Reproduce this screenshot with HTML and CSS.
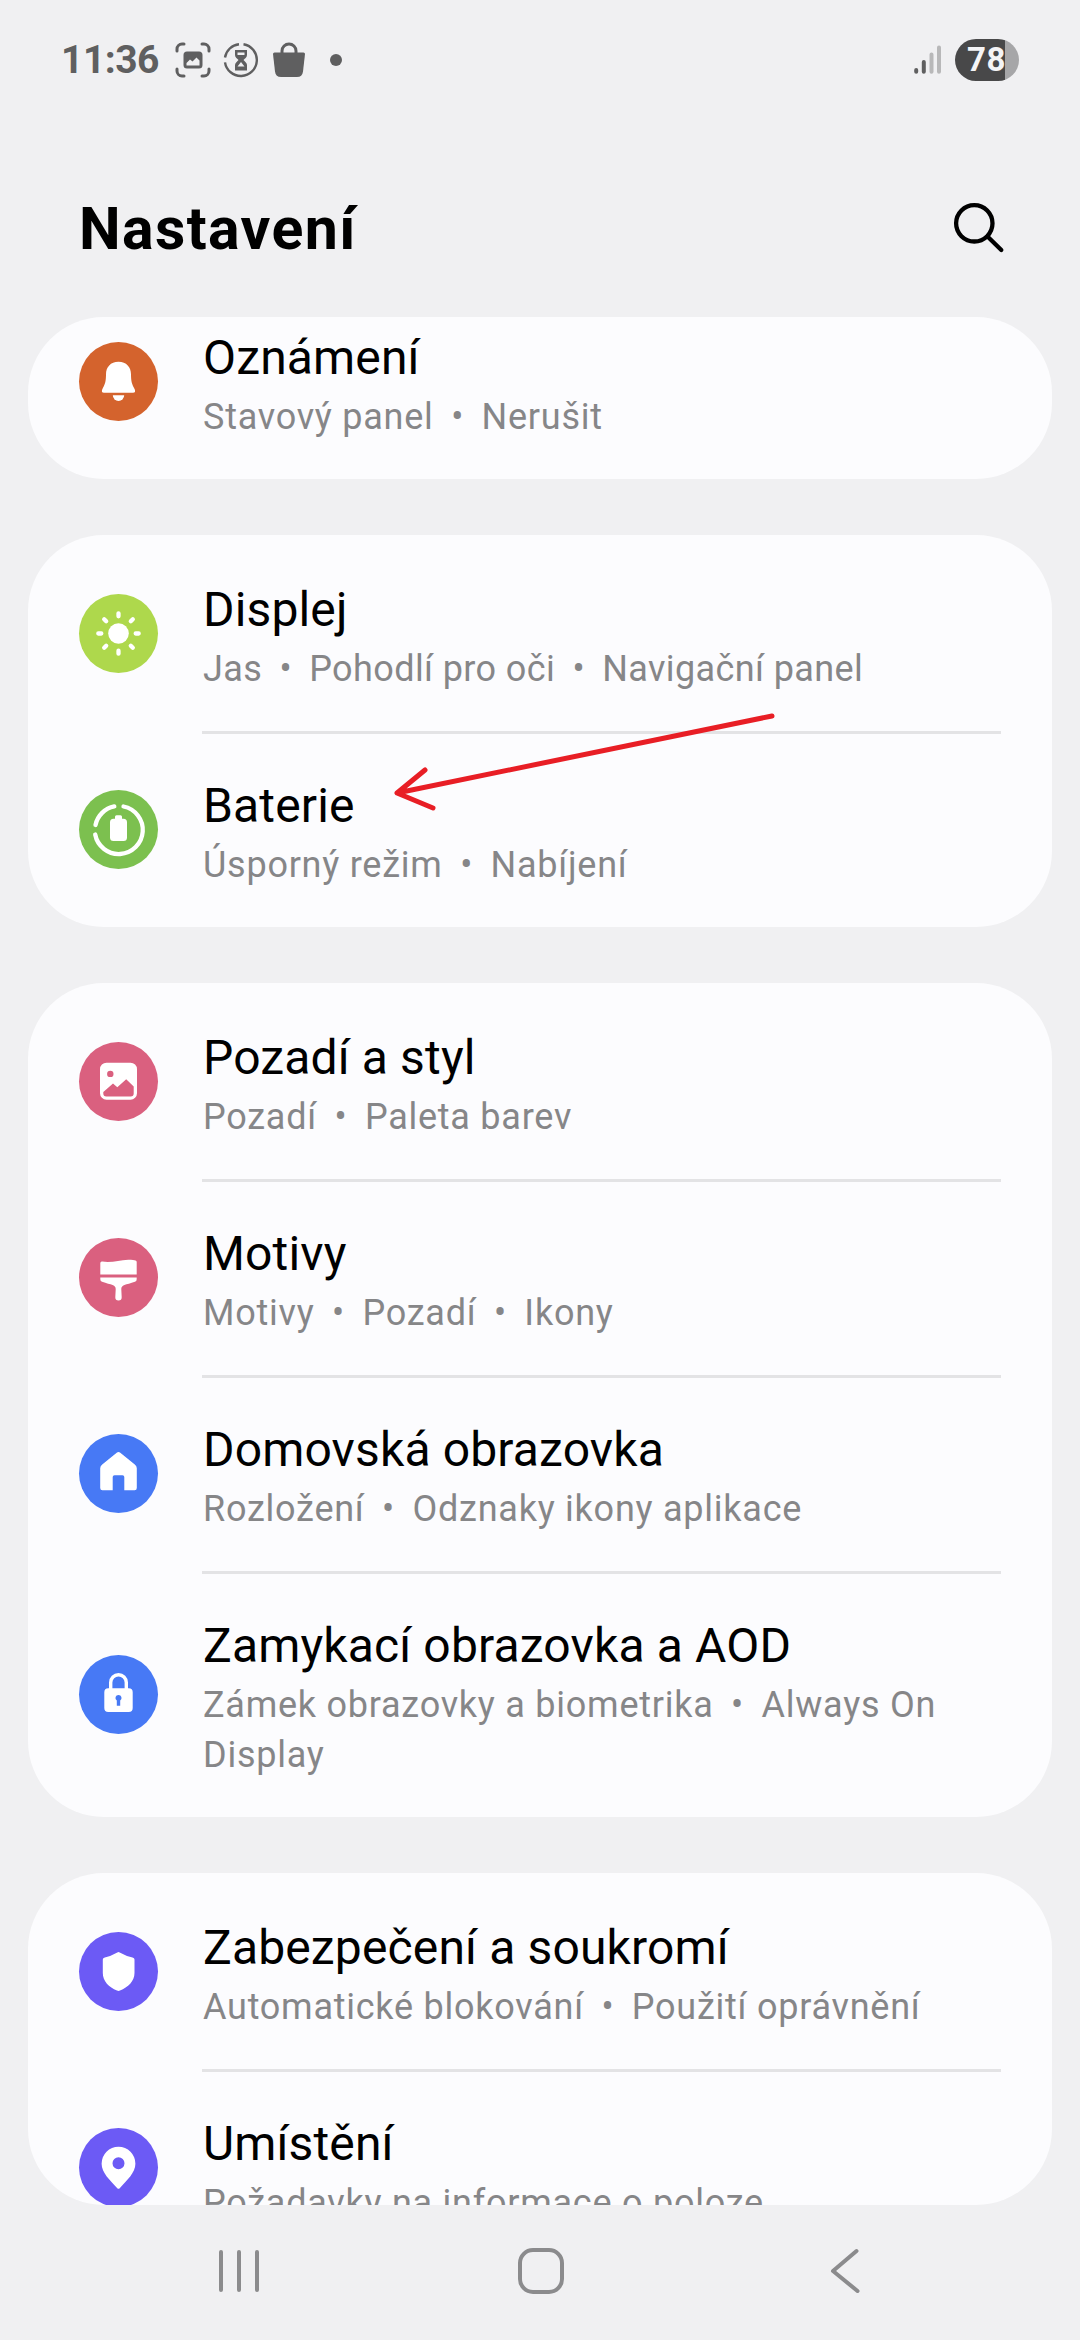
FILE: index.html
```html
<!DOCTYPE html>
<html lang="cs">
<head>
  <meta charset="UTF-8" />
  <meta name="viewport" content="width=device-width, initial-scale=1" />
  <title>Nastavení</title>
  <link rel="stylesheet" href="styles.css">
</head>
<body>

  <!-- Status bar -->
  <div class="status-bar">
    <span class="clock">11:36</span>
    <svg class="status-icon" width="36" height="36" viewBox="0 0 36 36">
      <path d="M2 9V7a5 5 0 0 1 5-5h2M27 2h2a5 5 0 0 1 5 5v2M34 27v2a5 5 0 0 1-5 5h-2M9 34H7a5 5 0 0 1-5-5v-2" fill="none" stroke="#5f5f60" stroke-width="3" stroke-linecap="round"/>
      <path fill-rule="evenodd" d="M12 9.5h12a3.5 3.5 0 0 1 3.5 3.5v10a3.5 3.5 0 0 1-3.5 3.5H12A3.5 3.5 0 0 1 8.5 23V13A3.5 3.5 0 0 1 12 9.5ZM11.500 23.500h13v-5l-3-3-4 4-2.500-2-3.500 3.500Z" fill="#5f5f60"/>
    </svg>
    <svg class="status-icon" width="36" height="36" viewBox="0 0 36 36">
      <path d="M20.5 2.200A16 16 0 1 1 2 20.300M2 15.500A16 16 0 0 1 16 2.200" fill="none" stroke="#5f5f60" stroke-width="2.400"/>
      <path fill-rule="evenodd" d="M12 8h12v5c0 2.500-2.500 3.500-3.500 5 1 1.500 3.500 2.500 3.500 5v5.500H12V23c0-2.500 2.500-3.500 3.500-5-1-1.500-3.500-2.500-3.500-5ZM14.500 10.500v2.500h7v-2.500ZM18 20l-3.500 4.500h7Z" fill="#5f5f60"/>
    </svg>
    <svg class="status-icon" width="36" height="36" viewBox="0 0 36 36">
      <path d="M11 12V9a7 7 0 0 1 14 0v3" fill="none" stroke="#5f5f60" stroke-width="3"/>
      <path d="M3.500 10.500h29q1.500 0 1.500 1.500l-2 17.500q-.7 5.500-6 5.500H10q-5.300 0-6-5.500L2 12q0-1.500 1.500-1.500Z" fill="#5f5f60"/>
    </svg>
    <span class="more-dot"></span>
    <svg class="signal" width="28" height="30" viewBox="0 0 28 30">
      <g stroke-width="4" stroke-linecap="round">
        <path d="M2.200 25v1.800M9.800 17v9.800" stroke="#5f5f60"/>
        <path d="M17.500 9.500v17.300M25 2.500v24.300" stroke="#b8b8b9"/>
      </g>
    </svg>
    <span class="battery">78</span>
  </div>

  <!-- App bar -->
  <header class="app-bar">
    <h1>Nastavení</h1>
    <svg width="54" height="54" viewBox="0 0 54 54" fill="none" stroke="#000" stroke-width="4.300" stroke-linecap="round">
      <circle cx="22.300" cy="22.300" r="18.200"/>
      <path d="M35.500 35.500 49.300 49"/>
    </svg>
  </header>

  <!-- Settings list -->
  <main class="list">

    <section class="card scrolled">
      <div class="item">
        <svg class="icon orange" viewBox="0 0 79 79">
          <path d="M39.500 19.700c8 0 12.500 5.500 12.500 12.500 0 7.500 1 9.800 3.800 15.300q1.200 3.200-1.800 3.200H25q-3 0-1.800-3.200C26 42 27 39.700 27 32.200c0-7 4.500-12.500 12.500-12.500Z"/>
          <path d="M33.800 53.300h11.400a5.700 5.700 0 0 1-11.400 0Z"/>
        </svg>
        <div class="item-text">
          <div class="title">Oznámení</div>
          <div class="summary">Stavový panel<span class="sep">•</span>Nerušit</div>
        </div>
      </div>
    </section>

    <section class="card">
      <div class="item">
        <svg class="icon lime" viewBox="0 0 79 79">
          <circle cx="39.500" cy="39.500" r="10.300"/>
          <path d="M39.500 19.300v3M39.500 56.700v3M19.300 39.500h3M56.700 39.500h3M25.200 25.200l2 2M51.800 51.800l2 2M53.800 25.200l-2 2M27.200 51.800l-2 2" fill="none" stroke="#fff" stroke-width="4.300" stroke-linecap="round"/>
        </svg>
        <div class="item-text">
          <div class="title">Displej</div>
          <div class="summary tight">Jas<span class="sep">•</span>Pohodlí pro oči<span class="sep">•</span>Navigační panel</div>
        </div>
      </div>
      <div class="item">
        <svg class="icon green" viewBox="0 0 79 79">
          <path d="M44.500 16.500A24 24 0 1 1 16.200 44.500M16.500 35A24 24 0 0 1 35.300 16.400" fill="none" stroke="#fff" stroke-width="4.300" stroke-linecap="round"/>
          <path d="M37.500 25.300h4q1.500 0 1.500 1.500v1.900h1.500q3.500 0 3.500 3.500v15.300q0 3.500-3.500 3.500h-10q-3.500 0-3.500-3.500V32.200q0-3.500 3.500-3.500H36v-1.900q0-1.500 1.500-1.500Z"/>
        </svg>
        <div class="item-text">
          <div class="title">Baterie</div>
          <div class="summary">Úsporný režim<span class="sep">•</span>Nabíjení</div>
        </div>
        <!-- Pointer to the battery entry -->
        <svg class="arrow" width="390" height="108" viewBox="0 0 390 108">
          <path d="M381 12 6 89M34 66 6 89l36 15" fill="none" stroke="#e81e25" stroke-width="5" stroke-linecap="round" stroke-linejoin="round"/>
        </svg>
      </div>
    </section>

    <section class="card">
      <div class="item">
        <svg class="icon pink" viewBox="0 0 79 79">
          <path fill-rule="evenodd" d="M27.500 20.700h24a6.500 6.500 0 0 1 6.500 6.500v24a6.500 6.500 0 0 1-6.500 6.500h-24a6.500 6.500 0 0 1-6.500-6.500v-24a6.500 6.500 0 0 1 6.500-6.500ZM31.300 28.700a3.200 3.200 0 1 0 0 6.400 3.200 3.200 0 1 0 0-6.400ZM24.300 51.500q0 3 3 3h24.400q3 0 3-3V44.500l-7.500-7.300L38.300 45.200l-4.300-3.800-9.700 8.600Z"/>
        </svg>
        <div class="item-text">
          <div class="title">Pozadí a styl</div>
          <div class="summary">Pozadí<span class="sep">•</span>Paleta barev</div>
        </div>
      </div>
      <div class="item">
        <svg class="icon pink" viewBox="0 0 79 79">
          <path d="M21.300 36.500V25.300q0-2 2-1.700c10 1.500 17-1.800 26-1.900 4 0 6 .3 7.200.7q1.200.3 1.200 1.600V36.500Z"/>
          <path d="M21.300 39.500h36.400v1.700q0 2-1.800 2.600c-4.500 1.500-8 2.400-10.500 3.300-2.200.8-3.200 2.200-3.100 4.200l.4 7.900a3.200 3.200 0 0 1-6.400 0l.4-7.900c.1-2-.9-3.400-3.100-4.200-2.500-.9-6-1.800-10.500-3.300q-1.800-.6-1.800-2.600Z"/>
        </svg>
        <div class="item-text">
          <div class="title">Motivy</div>
          <div class="summary">Motivy<span class="sep">•</span>Pozadí<span class="sep">•</span>Ikony</div>
        </div>
      </div>
      <div class="item">
        <svg class="icon blue" viewBox="0 0 79 79">
          <path d="M37.700 18.700q1.800-1.300 3.600 0L55.800 30.500q2 1.600 2 3.800V54q0 2.200-2.200 2.200H45.300V43q0-1.800-1.800-1.800h-8q-1.800 0-1.800 1.800v13.200H23.400q-2.200 0-2.200-2.200V34.300q0-2.200 2-3.800Z"/>
        </svg>
        <div class="item-text">
          <div class="title">Domovská obrazovka</div>
          <div class="summary">Rozložení<span class="sep">•</span>Odznaky ikony aplikace</div>
        </div>
      </div>
      <div class="item">
        <svg class="icon blue" viewBox="0 0 79 79">
          <path d="M31.700 35v-7.500a7.800 7.800 0 0 1 15.600 0V35" fill="none" stroke="#fff" stroke-width="3.400"/>
          <path fill-rule="evenodd" d="M29.300 33.300h20.400a4 4 0 0 1 4 4v15.700a4 4 0 0 1-4 4H29.300a4 4 0 0 1-4-4V37.300a4 4 0 0 1 4-4ZM39.500 40a3 3 0 0 0-1.700 5.500v5.300h3.400v-5.300A3 3 0 0 0 39.500 40Z"/>
        </svg>
        <div class="item-text">
          <div class="title">Zamykací obrazovka a AOD</div>
          <div class="summary">Zámek obrazovky a biometrika<span class="sep">•</span>Always On Display</div>
        </div>
      </div>
    </section>

    <section class="card">
      <div class="item">
        <svg class="icon violet" viewBox="0 0 79 79">
          <path d="M38.300 20.400q1.200-.6 2.400 0 6.500 3.700 12.800 5 2 .4 2 2.200V41c0 8.500-6.500 14-14.500 17.600q-1.500.8-3 0C30 55 23.800 49.500 23.800 41V27.600q0-1.800 2-2.200 6-1.300 12.500-5Z"/>
        </svg>
        <div class="item-text">
          <div class="title">Zabezpečení a soukromí</div>
          <div class="summary">Automatické blokování<span class="sep">•</span>Použití oprávnění</div>
        </div>
      </div>
      <div class="item">
        <svg class="icon violet" viewBox="0 0 79 79">
          <path fill-rule="evenodd" d="M39.500 18.700a16.900 16.900 0 0 1 16.900 17c0 9-8.500 16.500-15.700 24.500q-1.200 1.300-2.400 0C31 52.200 22.600 44.700 22.600 35.700a16.900 16.900 0 0 1 16.900-17ZM39.500 29.300a6 6 0 1 0 0 12 6 6 0 1 0 0-12Z"/>
        </svg>
        <div class="item-text">
          <div class="title">Umístění</div>
          <div class="summary">Požadavky na informace o poloze</div>
        </div>
      </div>
    </section>

  </main>

  <!-- Navigation bar -->
  <nav class="nav-bar">
    <svg width="46" height="48" viewBox="0 0 46 48"><path d="M5 5v38M23 5v38M41 5v38"/></svg>
    <svg class="home" width="48" height="48" viewBox="0 0 48 48"><rect x="3" y="3" width="42" height="42" rx="13"/></svg>
    <svg width="32" height="48" viewBox="0 0 32 48"><path d="M27.500 4 4 24l24.500 20"/></svg>
  </nav>

</body>
</html>
```

FILE: styles.css
```css
* {
  box-sizing: border-box;
}

body {
  margin: 0;
  width: 1080px;
  height: 2340px;
  display: flex;
  flex-direction: column;
  background: #f0f0f2;
  color: #000;
  font-family: Roboto, "Liberation Sans", sans-serif;
  overflow: hidden;
}

/* Status bar */
.status-bar {
  height: 120px;
  padding: 0 61px;
  display: flex;
  align-items: center;
}

.clock {
  width: 100px;
  margin-right: 14px;
  font-size: 39px;
  font-weight: 700;
  letter-spacing: -0.5px;
  color: #5f5f60;
}

.status-icon {
  margin-right: 12px;
}

.more-dot {
  width: 12px;
  height: 12px;
  margin-left: 11px;
  border-radius: 50%;
  background: #5f5f60;
}

.signal {
  margin-left: auto;
  margin-right: 13px;
}

.battery {
  width: 64px;
  height: 42px;
  padding-left: 12px;
  border-radius: 21px;
  background: linear-gradient(90deg, #484849 50px, #a6a6a8 50px);
  color: #f4f4f6;
  font-size: 33px;
  font-weight: 700;
  line-height: 42px;
  letter-spacing: 0.5px;
}

/* App bar */
.app-bar {
  height: 197px;
  padding: 19px 74px 0 79px;
  display: flex;
  align-items: center;
  justify-content: space-between;
}

h1 {
  margin: 0;
  font-size: 59px;
  font-weight: 700;
  letter-spacing: 1.4px;
}

/* Settings list */
.list {
  height: 1888px;
  margin: 0 28px;
  border-radius: 76px;
  overflow: hidden;
}

.card {
  margin-bottom: 56px;
  border-radius: 76px;
  background: #fcfcfe;
}

/* first card is partly scrolled under the app bar */
.scrolled {
  margin-top: -34px;
}

.item {
  position: relative;
  display: flex;
  align-items: center;
  padding: 0 51px;
}

.icon {
  flex: none;
  width: 79px;
  height: 79px;
  margin-right: 44px;
  border-radius: 50%;
  fill: #fff;
}

.orange { background: #d4632d; }
.lime { background: #aed84c; }
.green { background: #7cc04f; }
.pink { background: #da607f; }
.blue { background: #4779f5; }
.violet { background: #6c5af5; }

.item-text {
  flex: 1;
  padding: 40px 0 37px 1px;
}

.item + .item .item-text {
  box-shadow: inset 0 3px #e3e3e5;
}

.title {
  font-size: 48px;
  line-height: 69px;
  letter-spacing: 0.15px;
}

.summary {
  font-size: 36px;
  line-height: 50px;
  letter-spacing: 0.75px;
  color: #868688;
}

.summary.tight {
  letter-spacing: 0.4px;
}

.sep {
  display: inline-block;
  width: 48px;
  text-align: center;
}

.tight .sep {
  width: 47px;
}

.arrow {
  position: absolute;
  left: 363px;
  top: -27px;
}

/* Navigation bar */
.nav-bar {
  flex: 1;
  display: flex;
  align-items: center;
  padding: 0 219px 3px 216px;
}

.nav-bar svg {
  fill: none;
  stroke: #8b8b8d;
  stroke-width: 4;
  stroke-linecap: round;
  stroke-linejoin: round;
}

.nav-bar .home {
  margin-left: 255px;
  margin-right: auto;
}
```
